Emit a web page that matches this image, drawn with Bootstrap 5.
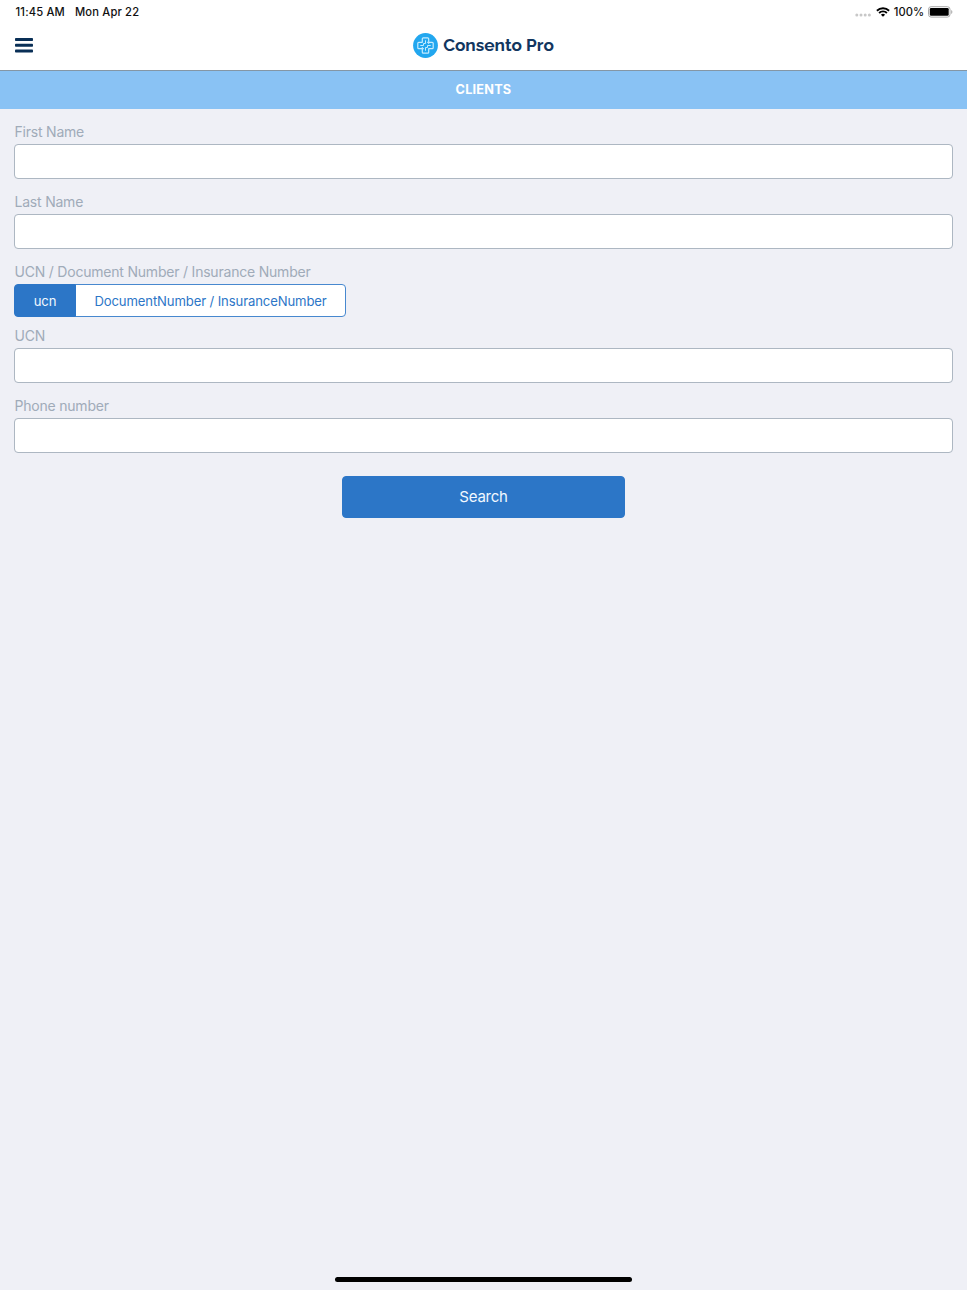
<!DOCTYPE html>
<html lang="en">
<head>
<meta charset="utf-8">
<meta name="viewport" content="width=device-width, initial-scale=1">
<title>Consento Pro</title>
<link href="https://cdn.jsdelivr.net/npm/bootstrap@5.3.0/dist/css/bootstrap.min.css" rel="stylesheet">
<style>
body{background:#eff0f6;font-family:Inter,"Liberation Sans",sans-serif;height:1290px;overflow:hidden}
svg{display:block}
.status-bar{height:24px;padding:0 14px 0 15.5px;font-size:11.2px;line-height:23px;font-weight:500;color:#111;background:#fff}
.status-left{letter-spacing:.17px;padding-top:.5px}
.status-date{margin-left:10px}
.cell-dots{margin:5px 5px 0 0}
.app-bar{height:47px;border-bottom:1px solid #8496a5;padding:0 15px;background:#fff}
.app-bar .side{width:100px}
.menu-btn{margin-top:-7px}
.brand{gap:5px;margin-bottom:4px}
.brand-name{font-family:Raleway,Montserrat,Inter,sans-serif;font-size:17.2px;font-weight:700;color:#12365f;line-height:24px;letter-spacing:.03px}
.page-title{height:38px;background:#89c2f4;color:#fff;font-size:12.7px;font-weight:700;line-height:38px;letter-spacing:.22px}
.search-form{padding:13px 14px 0}
.field{height:70px}
.field-label{font-size:14px;line-height:20px;height:22px;color:#a0abb9;display:block;padding-left:.5px;letter-spacing:-.21px}
.field .form-control{height:35px;min-height:0;border:1px solid #adb7c2;border-radius:4px;padding:4px 8px}
.kind{height:64px}
.kind .btn{--bs-btn-color:#2c76c7;--bs-btn-bg:#fff;--bs-btn-border-color:#4788cf;--bs-btn-active-color:#f1f8ff;--bs-btn-active-bg:#2c76c7;--bs-btn-active-border-color:#2c76c7;--bs-btn-border-radius:4px;font-size:13.1px;line-height:20px;height:33px;padding:5px 0;letter-spacing:-.12px}
.kind .btn-ucn{width:62px}
.kind .btn-doc{width:271px}
.btn-search{--bs-btn-color:#f1f8ff;--bs-btn-bg:#2c76c7;--bs-btn-border-color:#2c76c7;--bs-btn-border-radius:4px;width:283px;height:42px;font-size:15px;line-height:20px;margin-top:2px;letter-spacing:-.25px}
.home-bar{width:297px;height:5px;background:#000;margin-bottom:8px}
</style>
</head>
<body class="d-flex flex-column">
<div class="status-bar d-flex justify-content-between">
  <div class="status-left d-flex"><span>11:45 AM</span><span class="status-date">Mon Apr 22</span></div>
  <div class="d-flex align-items-center">
    <svg class="cell-dots" width="16" height="4" fill="#c8c8c8"><circle cx="1.8" cy="2" r="1.5"/><circle cx="6" cy="2" r="1.5"/><circle cx="10.2" cy="2" r="1.5"/><circle cx="14.4" cy="2" r="1.5"/></svg>
    <svg width="14" height="10" viewBox="0 0 14 10" fill="none" stroke="#000" stroke-width="1.9"><path d="M.9 3.7a8.8 8.8 0 0 1 12.2 0M3.1 6a5.6 5.6 0 0 1 7.8 0"/><path d="M7 9.8 4.9 7.7a3 3 0 0 1 4.2 0Z" fill="#000" stroke="none"/></svg>
    <span class="ms-1">100%</span>
    <svg class="ms-1" width="25" height="12" viewBox="0 0 25 12"><rect x=".5" y=".7" width="21.5" height="10.4" rx="2.6" fill="#fff" stroke="#aaa"/><rect x="1.8" y="2" width="18.9" height="7.8" rx="1.3"/><path d="M23.2 4v4q1.2-.6 1.2-2t-1.2-2Z" fill="#aaa"/></svg>
  </div>
</div>
<header class="app-bar d-flex justify-content-between align-items-center">
  <div class="side">
    <button class="menu-btn btn p-0 border-0" aria-label="Menu"><svg width="18" height="15" viewBox="0 0 18 15" fill="#092f56"><rect width="18" height="3" rx=".8"/><rect y="5.8" width="18" height="3" rx=".8"/><rect y="11.6" width="18" height="3" rx=".8"/></svg></button>
  </div>
  <div class="brand d-flex align-items-center">
    <svg width="25" height="25" viewBox="0 0 25 25" fill="none"><circle cx="12.5" cy="12.5" r="12.4" fill="#22a7ef"/><g stroke="#c5ecff" stroke-width="1.2" stroke-linejoin="round"><path d="M9.3 9.3V5.8q0-1 1-1h4.4q1 0 1 1v3.5h3.5q1 0 1 1v4.4q0 1-1 1h-3.5v3.5q0 1-1 1h-4.4q-1 0-1-1v-3.5H5.8q-1 0-1-1v-4.4q0-1 1-1Z"/><path d="M12.5 7.3v3.2h-2v2H7.3M17.7 12.5h-3.2v2h-2v3.2M14 9.3h1.7V11M11 15.7H9.3V14" stroke-width="1"/></g></svg>
    <span class="brand-name">Consento Pro</span>
  </div>
  <div class="side"></div>
</header>
<div class="page-title text-center">CLIENTS</div>
<main class="search-form flex-grow-1">
  <div class="field"><label class="field-label" for="first">First Name</label><input class="form-control" id="first"></div>
  <div class="field"><label class="field-label" for="last">Last Name</label><input class="form-control" id="last"></div>
  <div class="kind">
    <span class="field-label">UCN / Document Number / Insurance Number</span>
    <div class="btn-group" role="group"><button class="btn btn-ucn active">ucn</button><button class="btn btn-doc">DocumentNumber / InsuranceNumber</button></div>
  </div>
  <div class="field"><label class="field-label" for="ucn">UCN</label><input class="form-control" id="ucn"></div>
  <div class="field"><label class="field-label" for="phone">Phone number</label><input class="form-control" id="phone"></div>
  <div class="d-flex justify-content-center pt-2"><button class="btn btn-search">Search</button></div>
</main>
<div class="home-bar rounded-pill mx-auto"></div>
<script src="https://cdn.jsdelivr.net/npm/bootstrap@5.3.0/dist/js/bootstrap.bundle.min.js"></script>
</body>
</html>
